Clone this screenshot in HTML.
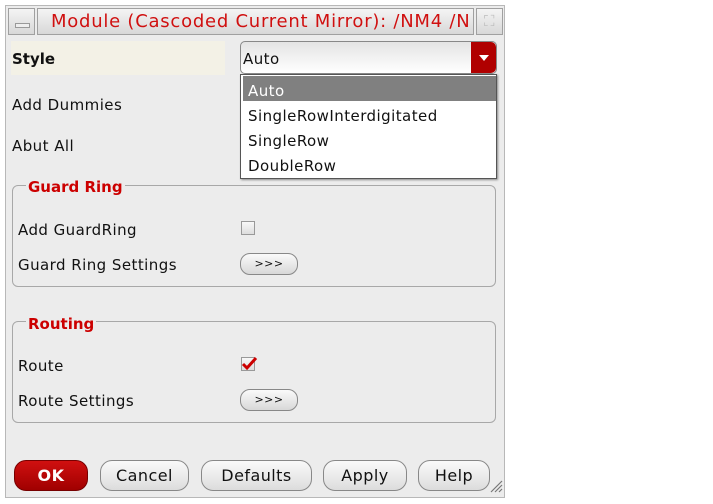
<!DOCTYPE html>
<html><head><style>
body{margin:0;width:713px;height:504px;background:#fff;position:relative;overflow:hidden;font-family:"DejaVu Sans","Liberation Sans",sans-serif;font-size:15px;color:#111;letter-spacing:0.45px}
.a{position:absolute}
.dlg{left:5px;top:5px;width:500px;height:493px;background:#ececec;border:1px solid #b8b8b8;box-sizing:border-box}
.tb{background:linear-gradient(#f4f4f4,#d8d8d8);border:1px solid #a0a0a0;box-sizing:border-box}
.btn{background:linear-gradient(#fafafa,#dcdcdc);border:1px solid #888;border-radius:12px;box-sizing:border-box;text-align:center;font-size:16px;line-height:30px}
.grp{border:1px solid #a8a8a8;border-radius:6px;box-sizing:border-box}
.gl{color:#c00;font-weight:bold;background:#ececec;padding:0 2px;font-size:15px;letter-spacing:0}
.sm{background:linear-gradient(#fafafa,#d8d8d8);border:1px solid #888;border-radius:10px;box-sizing:border-box;font-size:11px;text-align:center;line-height:19px}
</style></head><body>
<div class="a dlg"></div>
<div class="a tb" style="left:8px;top:8px;width:27px;height:27px"><div class="a" style="left:6px;top:14px;width:13px;height:3px;border:1px solid #999;background:#eee"></div></div>
<div class="a tb" style="left:37px;top:8px;width:437px;height:27px;color:#d01010;font-size:18px;line-height:25px;padding-left:13px;white-space:nowrap;overflow:hidden;letter-spacing:0.75px">Module (Cascoded Current Mirror): /NM4 /N</div>
<div class="a tb" style="left:476px;top:8px;width:27px;height:27px;color:#bbb;text-align:center;line-height:25px">⛶</div>
<div class="a" style="left:11px;top:41px;width:214px;height:34px;background:#f3f1e6"></div>
<div class="a" style="left:12px;top:50px;font-weight:bold;letter-spacing:0">Style</div>
<div class="a" style="left:240px;top:41px;width:257px;height:33px;border:1px solid #888;border-radius:5px;background:linear-gradient(#e4e4e4,#fff);box-sizing:border-box"></div>
<div class="a" style="left:243px;top:50px">Auto</div>
<div class="a" style="left:471px;top:42px;width:25px;height:31px;background:#b00000;border-radius:0 5px 5px 0"></div>
<div class="a" style="left:479px;top:55px;width:0;height:0;border-left:5px solid transparent;border-right:5px solid transparent;border-top:6px solid #fff"></div>
<div class="a" style="left:12px;top:96px">Add Dummies</div>
<div class="a" style="left:12px;top:137px">Abut All</div>
<div class="a" style="left:240px;top:74px;width:257px;height:105px;background:#fff;border:1px solid #555;box-sizing:border-box;box-shadow:1px 1px 2px #888"></div>
<div class="a" style="left:243px;top:76px;width:253px;height:25px;background:#808080"></div>
<div class="a" style="left:248px;top:82px;color:#fff">Auto</div>
<div class="a" style="left:248px;top:107px">SingleRowInterdigitated</div>
<div class="a" style="left:248px;top:132px">SingleRow</div>
<div class="a" style="left:248px;top:157px">DoubleRow</div>
<div class="a grp" style="left:12px;top:185px;width:484px;height:102px"></div>
<div class="a gl" style="left:26px;top:178px">Guard Ring</div>
<div class="a" style="left:18px;top:221px">Add GuardRing</div>
<div class="a" style="left:241px;top:221px;width:14px;height:14px;border:1px solid #999;background:linear-gradient(#f8f8f8,#ddd);box-sizing:border-box"></div>
<div class="a" style="left:18px;top:256px">Guard Ring Settings</div>
<div class="a sm" style="left:240px;top:253px;width:58px;height:22px">&gt;&gt;&gt;</div>
<div class="a grp" style="left:12px;top:321px;width:484px;height:102px"></div>
<div class="a gl" style="left:26px;top:315px">Routing</div>
<div class="a" style="left:18px;top:357px">Route</div>
<div class="a" style="left:241px;top:357px;width:14px;height:14px;border:1px solid #999;background:linear-gradient(#f8f8f8,#ddd);box-sizing:border-box"></div>
<svg class="a" style="left:240px;top:355px" width="18" height="16"><path d="M3 9 L7 13 L16 3" stroke="#c00" stroke-width="3" fill="none"/></svg>
<div class="a" style="left:18px;top:392px">Route Settings</div>
<div class="a sm" style="left:240px;top:389px;width:58px;height:22px">&gt;&gt;&gt;</div>
<div class="a btn" style="left:14px;top:460px;width:74px;height:31px;background:linear-gradient(#d01010,#a00000);color:#fff;font-weight:bold;border-color:#700">OK</div>
<div class="a btn" style="left:100px;top:460px;width:89px;height:31px">Cancel</div>
<div class="a btn" style="left:201px;top:460px;width:111px;height:31px">Defaults</div>
<div class="a btn" style="left:323px;top:460px;width:84px;height:31px">Apply</div>
<div class="a btn" style="left:418px;top:460px;width:72px;height:31px">Help</div>
<svg class="a" style="left:489px;top:478px" width="14" height="16"><path d="M2 14 L13 3 M6 14 L13 7 M10 14 L13 11" stroke="#777" stroke-width="1.2"/></svg>
</body></html>
